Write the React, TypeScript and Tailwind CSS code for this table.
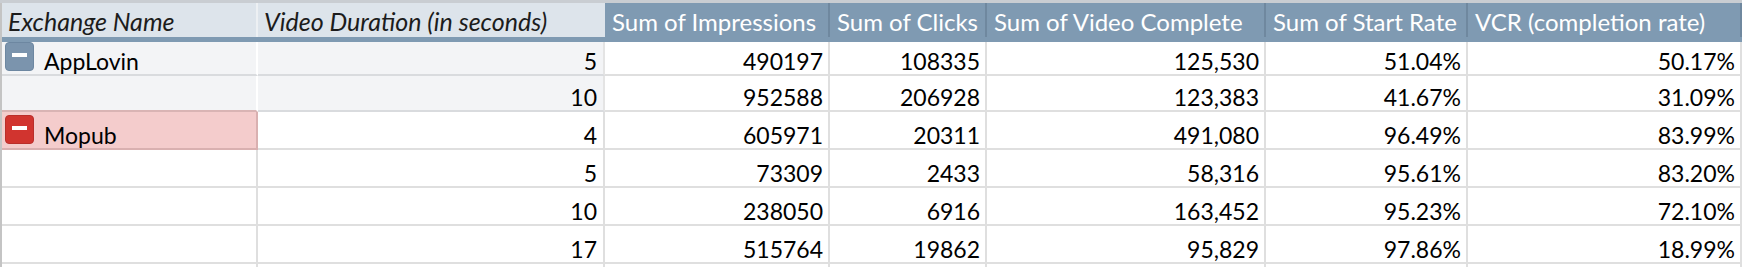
import React from "react";

type Row = {
  name?: string;
  tone?: "slate" | "red";
  dur: string;
  imp: string;
  clicks: string;
  complete: string;
  start: string;
  vcr: string;
};

const rows: Row[] = [
  { name: "AppLovin", tone: "slate", dur: "5", imp: "490197", clicks: "108335", complete: "125,530", start: "51.04%", vcr: "50.17%" },
  { dur: "10", imp: "952588", clicks: "206928", complete: "123,383", start: "41.67%", vcr: "31.09%" },
  { name: "Mopub", tone: "red", dur: "4", imp: "605971", clicks: "20311", complete: "491,080", start: "96.49%", vcr: "83.99%" },
  { dur: "5", imp: "73309", clicks: "2433", complete: "58,316", start: "95.61%", vcr: "83.20%" },
  { dur: "10", imp: "238050", clicks: "6916", complete: "163,452", start: "95.23%", vcr: "72.10%" },
  { dur: "17", imp: "515764", clicks: "19862", complete: "95,829", start: "97.86%", vcr: "18.99%" },
];

// row heights incl. the 2px bottom rule
const heights = ["h-[34px]", "h-[36px]", "h-[38px]", "h-[38px]", "h-[38px]", "h-[38px]"];

const numCols = [
  { key: "imp", w: "w-[225px]", label: "Sum of Impressions" },
  { key: "clicks", w: "w-[157px]", label: "Sum of Clicks" },
  { key: "complete", w: "w-[279px]", label: "Sum of Video Complete" },
  { key: "start", w: "w-[202px]", label: "Sum of Start Rate" },
  { key: "vcr", w: "w-[274px]", label: "VCR (completion rate)" },
] as const;

function Toggle({ tone }: { tone: "slate" | "red" }) {
  return (
    <span
      className={
        tone === "slate"
          ? "flex h-[29px] w-[29px] shrink-0 justify-center rounded-[4px] border border-[#6d87a1] bg-[#7b94ad]"
          : "flex h-[29px] w-[29px] shrink-0 justify-center rounded-[4px] border border-[#b92e2a] bg-[#d1342f]"
      }
    >
      <span className="mt-[10px] h-[4px] w-[15px] bg-white" />
    </span>
  );
}

function NameCell({ row, i }: { row: Row; i: number }) {
  let cls = "border-[#dfdfdf] border-r-[#dfdfdf] bg-white";
  if (i === 0) cls = "bg-[#f3f4f6] border-b-[#d9dbde] border-r-white";
  if (i === 1) cls = "bg-[#f3f4f6] border-b-[#d9b4b4] border-r-white";
  if (i === 2) cls = "bg-[#f4cccc] border-b-[#d9b0b0] border-r-[#d9b0b0]";
  return (
    <div className={`flex w-[256px] border-r-2 border-b-2 pl-[3px] ${heights[i]} ${cls}`}>
      {row.tone && (
        <div className={i === 0 ? "mt-0" : "mt-[3px]"}>
          <Toggle tone={row.tone} />
        </div>
      )}
      {row.name && (
        <span className="ml-[10px] self-end pb-[1px] text-[23px] leading-none text-black">
          {row.name}
        </span>
      )}
    </div>
  );
}

export default function App() {
  return (
    <div className="h-[267px] w-[1747px] overflow-hidden bg-white font-['Lato'] text-black">
      <div className="h-[3px] w-[1742px] bg-[#c9cdd2]" />
      <div className="w-[1744px] border-l-2 border-[#c4c4c4]">
        {/* header */}
        <div className="flex h-[34px]">
          <div className="flex w-[256px] items-end border-r-2 border-[#edf0f3] bg-[#dde4eb] pb-[3px] pl-[6px] text-[25px] italic leading-none text-[#1c1c1c]">
            Exchange Name
          </div>
          <div className="flex w-[347px] items-end bg-[#dde4eb] pb-[3px] pl-[6px] text-[25px] italic leading-none text-[#1c1c1c]">
            Video Duration (in seconds)
          </div>
          {numCols.map((c) => (
            <div
              key={c.key}
              className={`flex ${c.w} items-end whitespace-nowrap border-r-2 border-[#6f889f] bg-[#7f9ab2] pb-[3px] pl-[7px] text-[24px] leading-none text-white`}
            >
              {c.label}
            </div>
          ))}
        </div>
        <div className="h-[5px] w-[1740px] bg-[#7f9ab2]" />

        {/* body */}
        {rows.map((row, i) => (
          <div key={i} className="flex">
            <NameCell row={row} i={i} />
            <div
              className={`flex w-[347px] items-end justify-end border-r-2 border-b-2 pb-[1px] pr-[6px] text-[23px] leading-none ${heights[i]} ${
                i < 2 ? "border-[#e4e4e4] border-b-[#d9dbde] bg-[#f3f4f6]" : "border-[#dfdfdf] bg-white"
              }`}
            >
              {row.dur}
            </div>
            {numCols.map((c) => (
              <div
                key={c.key}
                className={`flex ${c.w} items-end justify-end border-r-2 border-b-2 border-[#dfdfdf] pb-[1px] pr-[5px] text-[23px] leading-none ${heights[i]}`}
              >
                {row[c.key]}
              </div>
            ))}
          </div>
        ))}

        {/* top of the next row, cut off */}
        <div className="flex h-[3px]">
          <div className="w-[256px] border-r-2 border-[#dfdfdf]" />
          <div className="w-[347px] border-r-2 border-[#dfdfdf]" />
          {numCols.map((c) => (
            <div key={c.key} className={`${c.w} border-r-2 border-[#dfdfdf]`} />
          ))}
        </div>
      </div>
    </div>
  );
}
